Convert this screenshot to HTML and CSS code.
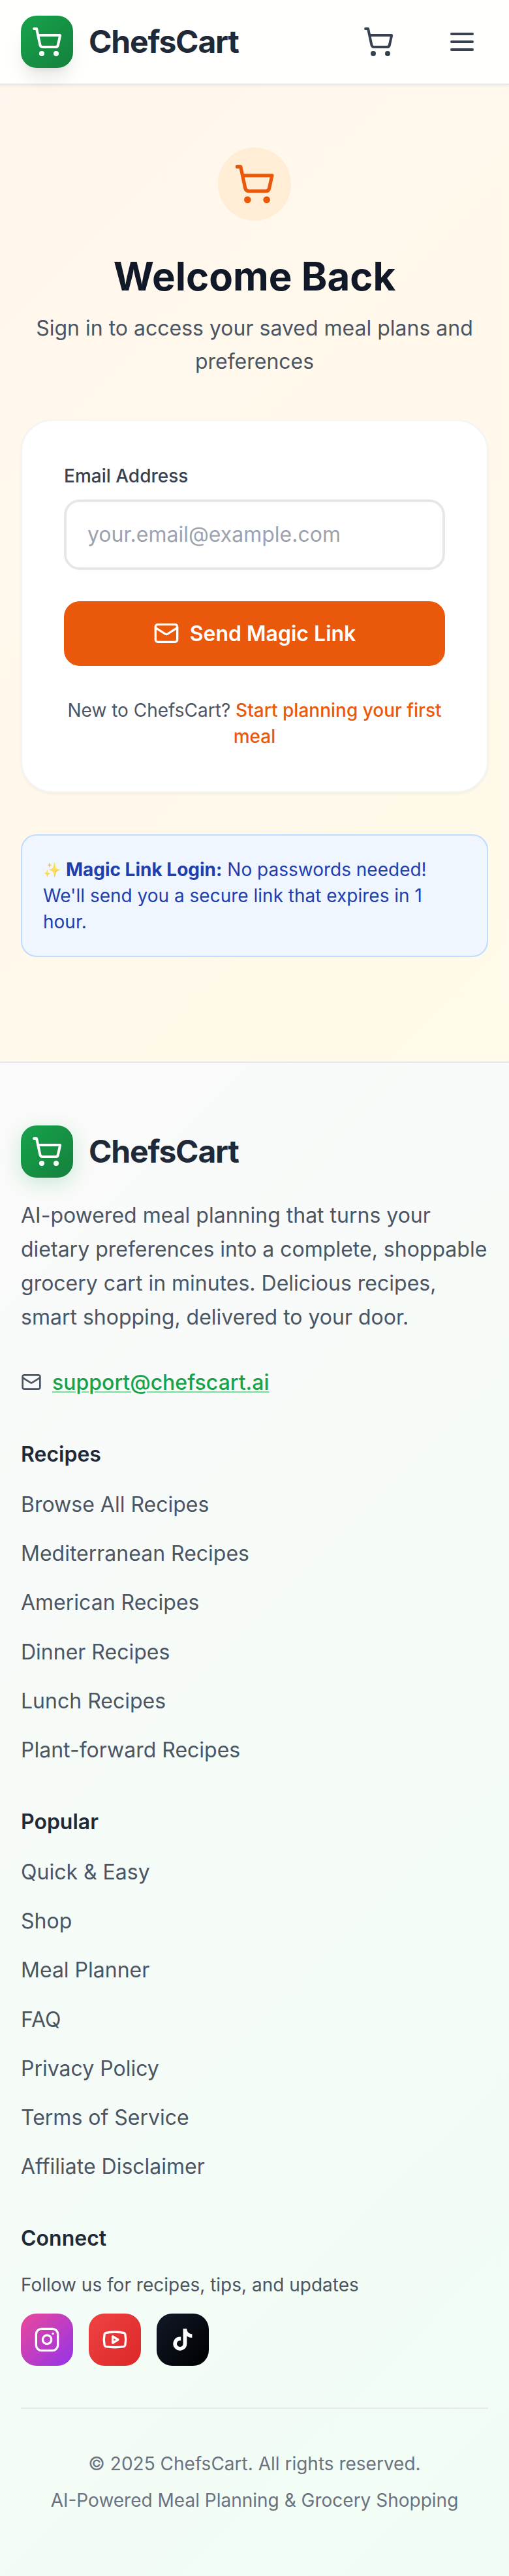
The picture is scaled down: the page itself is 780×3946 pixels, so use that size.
FILE: index.html
```html
<!DOCTYPE html>
<html lang="en">
<head>
<meta charset="utf-8">
<title>ChefsCart – Sign in</title>
<link rel="stylesheet" href="styles.css">
</head>
<body>
<svg class="sprite" aria-hidden="true">
  <symbol id="cart" viewBox="0 0 24 24"><circle cx="8" cy="21" r="1"/><circle cx="19" cy="21" r="1"/><path d="M2.05 2.05h2l2.66 12.42a2 2 0 0 0 2 1.58h9.78a2 2 0 0 0 1.95-1.57l1.65-7.43H5.12"/></symbol>
  <symbol id="menu" viewBox="0 0 24 24"><path d="M4 6h16M4 12h16M4 18h16"/></symbol>
  <symbol id="mail" viewBox="0 0 24 24"><rect width="20" height="16" x="2" y="4" rx="2"/><path d="m22 7-8.97 5.7a1.94 1.94 0 0 1-2.06 0L2 7"/></symbol>
  <symbol id="instagram" viewBox="0 0 24 24"><rect width="20" height="20" x="2" y="2" rx="5"/><path d="M16 11.37A4 4 0 1 1 12.63 8 4 4 0 0 1 16 11.37z"/><path d="M17.5 6.5h.01"/></symbol>
  <symbol id="youtube" viewBox="0 0 24 24"><path d="M2.5 17a24.12 24.12 0 0 1 0-10 2 2 0 0 1 1.4-1.4 49.56 49.56 0 0 1 16.2 0A2 2 0 0 1 21.5 7a24.12 24.12 0 0 1 0 10 2 2 0 0 1-1.4 1.4 49.55 49.55 0 0 1-16.2 0A2 2 0 0 1 2.5 17"/><path d="m10 15 5-3-5-3z"/></symbol>
  <symbol id="tiktok" viewBox="0 0 24 24"><path d="M19.59 6.69a4.83 4.83 0 0 1-3.77-4.25V2h-3.45v13.67a2.89 2.89 0 0 1-5.2 1.74 2.89 2.89 0 0 1 2.31-4.64 2.93 2.93 0 0 1 .88.13V9.4a6.84 6.84 0 0 0-1-.05A6.33 6.33 0 0 0 5 20.1a6.34 6.34 0 0 0 10.86-4.43v-7a8.16 8.16 0 0 0 4.77 1.52v-3.4a4.85 4.85 0 0 1-1-.1z"/></symbol>
</svg>

<header class="header">
  <a class="brand">
    <span class="brand-mark"><svg class="icon icon-md"><use href="#cart"/></svg></span>
    <span class="brand-name">ChefsCart</span>
  </a>
  <nav class="header-actions">
    <svg class="icon icon-md"><use href="#cart"/></svg>
    <svg class="icon icon-md"><use href="#menu"/></svg>
  </nav>
</header>

<main class="main">
  <section class="intro">
    <div class="intro-mark"><svg class="icon icon-lg"><use href="#cart"/></svg></div>
    <h1 class="title">Welcome Back</h1>
    <p class="subtitle">Sign in to access your saved meal plans and preferences</p>
  </section>

  <form class="card">
    <label class="label" for="email">Email Address</label>
    <input class="input" id="email" type="email" placeholder="your.email@example.com">
    <button class="button" type="button"><svg class="icon icon-btn"><use href="#mail"/></svg>Send Magic Link</button>
    <p class="signup">New to ChefsCart? <a class="signup-link">Start planning your first meal</a></p>
  </form>

  <p class="notice"><span class="sparkles">✨</span> <strong class="notice-title">Magic Link Login:</strong> No passwords needed! We'll send you a secure link that expires in 1 hour.</p>
</main>

<footer class="footer">
  <div class="brand">
    <span class="brand-mark brand-mark-green"><svg class="icon icon-md"><use href="#cart"/></svg></span>
    <span class="brand-name">ChefsCart</span>
  </div>
  <p class="about">AI-powered meal planning that turns your dietary preferences into a complete, shoppable grocery cart in minutes. Delicious recipes, smart shopping, delivered to your door.</p>
  <div class="contact"><svg class="icon icon-sm"><use href="#mail"/></svg><a class="contact-link">support@chefscart.ai</a></div>

  <section class="group">
    <h3 class="group-title">Recipes</h3>
    <ul class="links">
      <li>Browse All Recipes</li>
      <li>Mediterranean Recipes</li>
      <li>American Recipes</li>
      <li>Dinner Recipes</li>
      <li>Lunch Recipes</li>
      <li>Plant-forward Recipes</li>
    </ul>
  </section>
  <section class="group">
    <h3 class="group-title">Popular</h3>
    <ul class="links">
      <li>Quick &amp; Easy</li>
      <li>Shop</li>
      <li>Meal Planner</li>
      <li>FAQ</li>
      <li>Privacy Policy</li>
      <li>Terms of Service</li>
      <li>Affiliate Disclaimer</li>
    </ul>
  </section>
  <section class="group">
    <h3 class="group-title">Connect</h3>
    <p class="follow">Follow us for recipes, tips, and updates</p>
    <div class="socials">
      <a class="social instagram"><svg class="icon icon-btn"><use href="#instagram"/></svg></a>
      <a class="social youtube"><svg class="icon icon-btn"><use href="#youtube"/></svg></a>
      <a class="social tiktok"><svg class="icon icon-btn icon-solid"><use href="#tiktok"/></svg></a>
    </div>
  </section>

  <div class="legal">
    <p>© 2025 ChefsCart. All rights reserved.</p>
    <p>AI-Powered Meal Planning &amp; Grocery Shopping</p>
  </div>
</footer>
</body>
</html>
```
FILE: styles.css
```css
*, *::before, *::after { box-sizing: border-box; margin: 0; padding: 0; }
body {
  font-family: Inter, "Liberation Sans", sans-serif;
  font-size: 32px;
  line-height: 1.6;
  color: #1f2937;
  background: #fff;
}
.sprite { display: none; }

.icon { flex: none; display: block; fill: none; stroke: currentColor; stroke-width: 2; stroke-linecap: round; stroke-linejoin: round; }
.icon-sm { width: 32px; height: 32px; }
.icon-btn { width: 40px; height: 40px; }
.icon-md { width: 48px; height: 48px; }
.icon-lg { width: 64px; height: 64px; }
.icon-solid { fill: currentColor; stroke: none; }

.header {
  position: relative;
  display: flex;
  align-items: center;
  justify-content: space-between;
  height: 130px;
  padding: 0 48px 0 32px;
  background: #fffffd;
  border-bottom: 2px solid #e5e7eb;
  box-shadow: 0 2px 4px rgba(0, 0, 0, .05);
}
.header-actions { display: flex; gap: 80px; color: #374151; }
.brand { display: flex; align-items: center; gap: 24px; }
.brand-mark {
  display: flex;
  align-items: center;
  justify-content: center;
  width: 80px;
  height: 80px;
  color: #fff;
  border-radius: 24px;
  background: linear-gradient(135deg, #16a34a, #15803d);
  box-shadow: 0 20px 30px -6px rgba(0, 0, 0, .1), 0 8px 12px -8px rgba(0, 0, 0, .1);
}
.brand-mark-green { box-shadow: 0 8px 30px rgba(22, 163, 74, .2); }
.brand-name { font-size: 48px; font-weight: 700; line-height: 64px; letter-spacing: -.025em; }

.main { padding: 96px 32px 160px; background: linear-gradient(135deg, #fff7ed, #fffaea); }
.intro { display: flex; flex-direction: column; align-items: center; text-align: center; }
.intro-mark {
  display: flex;
  align-items: center;
  justify-content: center;
  width: 112px;
  height: 112px;
  margin-bottom: 48px;
  color: #ea580c;
  background: #ffedd5;
  border-radius: 50%;
}
.title { margin-bottom: 16px; font-size: 60px; font-weight: 700; line-height: 1.25; color: #111827; }
.subtitle { color: #4b5563; }

.card {
  display: flex;
  flex-direction: column;
  margin-top: 64px;
  padding: 64px;
  background: #fff;
  border: 2px solid #f3f4f6;
  border-radius: 48px;
  box-shadow: 0 2px 4px rgba(0, 0, 0, .05);
}
.label { margin-bottom: 16px; font-size: 28px; font-weight: 500; line-height: 40px; color: #374151; }
.input {
  width: 100%;
  height: 107.2px;
  padding: 24px 32px;
  font: inherit;
  color: #111827;
  background: #fff;
  border: 4px solid #e5e7eb;
  border-radius: 24px;
}
.input::placeholder { color: #9ca3af; }
.button {
  display: flex;
  align-items: center;
  justify-content: center;
  gap: 16px;
  margin: 48px 0;
  padding: 24px 48px;
  font: inherit;
  font-weight: 600;
  color: #fff;
  background: #ea580c;
  border: 0;
  border-radius: 24px;
}
.signup { font-size: 28px; line-height: 40px; text-align: center; color: #4b5563; }
.signup-link { font-weight: 500; color: #ea580c; }
.notice {
  margin-top: 64px;
  padding: 32px;
  font-size: 28px;
  line-height: 40px;
  color: #1e40af;
  background: #eff6ff;
  border: 2px solid #bfdbfe;
  border-radius: 24px;
}
.notice-title { font-weight: 700; }
.sparkles { font-size: 22px; line-height: 1; vertical-align: 2px; opacity: .8; }

.footer { padding: 96px 32px; border-top: 2px solid #e5e7eb; background: linear-gradient(135deg, #fafafa, #f0fdf4); }
.about { margin-top: 32px; line-height: 52px; color: #4b5563; }
.contact { display: flex; align-items: center; gap: 16px; margin-top: 48px; color: #4b5563; }
.contact-link {
  font-weight: 500;
  color: #16a34a;
  text-decoration: underline;
  text-decoration-color: #86efac;
  text-decoration-thickness: 3px;
  text-underline-offset: 2px;
}
.group { margin-top: 64px; }
.group-title { margin-bottom: 30px; font-size: 32px; font-weight: 600; line-height: 42px; }
.links { display: flex; flex-direction: column; gap: 24px; list-style: none; color: #4b5563; }
.follow { margin-bottom: 24px; font-size: 28px; line-height: 40px; color: #4b5563; }
.socials { display: flex; gap: 24px; }
.social { display: flex; align-items: center; justify-content: center; width: 80px; height: 80px; color: #fff; border-radius: 24px; }
.instagram { background: linear-gradient(135deg, #ec4899, #9333ea); }
.youtube { background: linear-gradient(135deg, #ef4444, #dc2626); }
.tiktok { background: linear-gradient(135deg, #111827, #000); }
.legal {
  display: flex;
  flex-direction: column;
  gap: 16px;
  margin-top: 64px;
  padding-top: 64px;
  font-size: 28px;
  line-height: 40px;
  text-align: center;
  color: #6b7280;
  border-top: 2px solid #e5e7eb;
}
```
